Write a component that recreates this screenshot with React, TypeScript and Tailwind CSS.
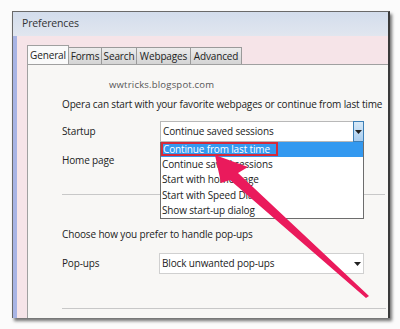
import React from 'react';

const font = "font-['Open_Sans','Noto_Sans',sans-serif]";

const tabs = [
  { t: 'Forms', w: 'w-[33px]' },
  { t: 'Search', w: 'w-[35px]' },
  { t: 'Webpages', w: 'w-[54px]' },
  { t: 'Advanced', w: 'w-[51px]' },
];

const options = [
  'Continue saved sessions',
  'Start with home page',
  'Start with Speed Dial',
  'Show start-up dialog',
];

const Caret = () => (
  <svg width="7" height="4" viewBox="0 0 7 4">
    <path d="M0 0 L7 0 L3.5 4 Z" fill="#222" />
  </svg>
);

const App: React.FC = () => {
  return (
    <div className={`relative w-[400px] h-[329px] overflow-hidden bg-[#fbfbfb] pt-[11px] pl-[12px] ${font} text-[10px] tracking-[-0.15px] text-[#222]`}>
      <div className="w-[378px] h-[307px] flex flex-col border-l border-t border-[#6a6a6a] border-r-2 border-r-[#3a3a3a] shadow-[2px_3px_3px_rgba(0,0,0,0.55)]">
        <div className="h-[24px] shrink-0 flex items-center pl-[9px] bg-gradient-to-b from-[#d3ddec] to-[#e1e6ef] text-[10.5px] text-[#333]">
          Preferences
        </div>
        <div className="flex-1 flex min-h-0">
          <div className="w-[4px] bg-[#a8b4e4]" />
          <div className="flex-1 flex flex-col bg-[#f6e4e8] pl-[10px] pt-[9px] min-w-0">
            <div className="h-[19px] flex items-end">
              <div className="h-[19px] w-[42px] flex items-center justify-center bg-[#fafafa] border border-b-0 border-[#a0a0a0]">
                General
              </div>
              {tabs.map((x) => (
                <div
                  key={x.t}
                  className={`h-[17px] ${x.w} flex items-center justify-center bg-gradient-to-b from-[#ececec] to-[#d4d4d4] border-r border-t border-[#9a9a9a]`}
                >
                  {x.t}
                </div>
              ))}
            </div>
            <div className="flex-1 bg-[#f8f7f5] border-l border-t border-[#a0a0a0] pl-[34px] pr-[2px] flex flex-col min-w-0">
              <div className="pl-[47px] pt-[13px] h-[28px] text-[9.5px] text-[#555] tracking-[0.2px]">
                wwtricks.blogspot.com
              </div>
              <div className="h-[22px] flex items-center whitespace-nowrap">
                Opera can start with your favorite webpages or continue from last time
              </div>
              <div className="mt-[6px] flex items-center h-[21px]">
                <div className="w-[98px]">Startup</div>
                <div className="w-[204px] h-[21px] flex items-center bg-white border border-[#b8b8b8]">
                  <div className="flex-1 pl-[2px]">Continue saved sessions</div>
                  <div className="w-[11px] h-[21px] -mr-px -mt-px -mb-px flex items-center justify-center border border-[#3d7fb6] bg-gradient-to-b from-[#d7e9f8] to-[#a9cdee]">
                    <Caret />
                  </div>
                </div>
              </div>
              <div className="mt-[9px] h-[18px] flex items-center">Home page</div>
              <div className="mt-[25px] mr-[1px] border-t border-[#c8c8c8]" />
              <div className="mt-[31px] h-[16px] flex items-center">
                Choose how you prefer to handle pop-ups
              </div>
              <div className="mt-[11px] flex items-center h-[21px]">
                <div className="w-[97px]">Pop-ups</div>
                <div className="w-[205px] h-[21px] flex items-center bg-white border border-[#d0d0d0]">
                  <div className="flex-1 pl-[2px]">Block unwanted pop-ups</div>
                  <div className="w-[11px] flex justify-center">
                    <Caret />
                  </div>
                </div>
              </div>
              <div className="mt-[34px] border-t border-[#c8c8c8]" />
            </div>
          </div>
        </div>
      </div>

      {/* opened dropdown list */}
      <div className="absolute left-[160px] top-[142px] w-[204px] h-[77px] bg-white border border-[#6d6d6d] border-t-0 flex flex-col">
        <div className="h-[15px] bg-[#3399f0] text-white flex items-center">
          <div className="h-[14px] w-[117px] border-2 border-[#d42a3a] flex items-center leading-none whitespace-nowrap">
            Continue from last time
          </div>
        </div>
        {options.map((o) => (
          <div key={o} className="h-[15.3px] pl-[1px] flex items-center whitespace-nowrap">
            {o}
          </div>
        ))}
      </div>

      {/* red arrow */}
      <svg className="absolute left-0 top-0 pointer-events-none" width="400" height="329" viewBox="0 0 400 329">
        <polygon
          points="215,155 248,167 238,173 369,296 366,298 230,180 221,183"
          fill="#ea1a5c"
        />
      </svg>
    </div>
  );
};

export default App;
